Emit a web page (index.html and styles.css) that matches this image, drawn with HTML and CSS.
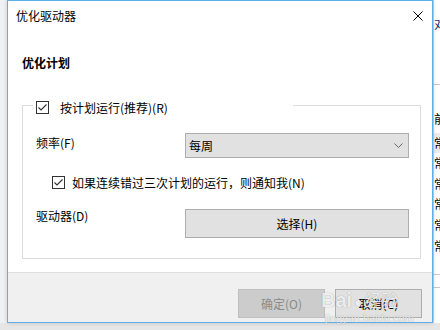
FILE: index.html
```html
<!DOCTYPE html>
<html lang="zh-CN">
<head>
  <meta charset="UTF-8" />
  <title>优化驱动器</title>
  <link rel="stylesheet" href="styles.css">
</head>
<body>
  <div class="screen">
    <div class="gutter"></div>

    <!-- Dialog window -->
    <div class="dialog">
      <div class="titlebar">
        <span class="title">优化驱动器</span>
        <svg class="close" width="10" height="10" viewBox="0 0 10 10">
          <path d="M0.5 0.5 L9.5 9.5 M9.5 0.5 L0.5 9.5" stroke="#000" stroke-width="1" fill="none" />
        </svg>
      </div>

      <div class="content">
        <h2 class="section-title">优化计划</h2>
        <fieldset class="group">
          <legend class="group-head">
            <span class="check">
              <svg width="13" height="13" viewBox="0 0 13 13">
                <rect x="0.5" y="0.5" width="12" height="12" fill="#fff" stroke="#333" />
                <polyline points="2.5,6.5 5,9 10.5,3.5" fill="none" stroke="#333" stroke-width="1.1" />
              </svg>
            </span>
            <span>按计划运行(推荐)(R)</span>
          </legend>

          <div class="row row-freq">
            <span class="row-label">频率(F)</span>
            <div class="combo">
              <span>每周</span>
              <svg width="9" height="5" viewBox="0 0 9 5">
                <polyline points="0.5,0.5 4.5,4.5 8.5,0.5" fill="none" stroke="#666" stroke-width="1" />
              </svg>
            </div>
          </div>

          <div class="row row-notify">
            <span class="check">
              <svg width="13" height="13" viewBox="0 0 13 13">
                <rect x="0.5" y="0.5" width="12" height="12" fill="#fff" stroke="#333" />
                <polyline points="2.5,6.5 5,9 10.5,3.5" fill="none" stroke="#333" stroke-width="1.1" />
              </svg>
            </span>
            <span>如果连续错过三次计划的运行，则通知我(N)</span>
          </div>

          <div class="row row-drive">
            <span class="row-label">驱动器(D)</span>
            <button class="btn btn-wide">选择(H)</button>
          </div>
        </fieldset>
      </div>

      <div class="footer">
        <button class="btn btn-disabled">确定(O)</button>
        <button class="btn">取消(C)</button>
      </div>

      <!-- site watermark over the footer -->
      <div class="watermark">
        <span class="wm-logo">Bai</span><span class="wm-paw">&#9679;</span><span class="wm-cn">经验</span>
        <div class="wm-url">jingyan.baidu.com</div>
      </div>
    </div>

    <!-- window behind the dialog -->
    <div class="backdrop">
      <p class="bg-row bg-top">对</p>
      <div class="bg-line"></div>
      <p class="bg-row bg-first">前</p>
      <p class="bg-row bg-sel">常</p>
      <p class="bg-row">常</p>
      <p class="bg-row">常</p>
      <p class="bg-row">常</p>
      <p class="bg-row">常</p>
      <p class="bg-row">常</p>
      <div class="bg-line bg-line-low"></div>
      <div class="bg-line bg-line-last"></div>
    </div>
  </div>
</body>
</html>
```

FILE: styles.css
```css
* {
  box-sizing: border-box;
}
body {
  margin: 0;
  font-family: "Noto Sans CJK SC", "Noto Sans", sans-serif;
  font-size: 12px;
  line-height: 17px;
  color: #000;
  background: #e9e9e9;
}
.screen {
  display: flex;
  width: 440px;
  height: 330px;
  overflow: hidden;
  background: #e6e6e6;
}
.gutter {
  width: 7px;
  height: 323px;
  background: #f1f1f1;
  flex-shrink: 0;
}

/* dialog */
.dialog {
  position: relative;
  z-index: 1;
  width: 426px;
  height: 323px;
  flex-shrink: 0;
  display: flex;
  flex-direction: column;
  border: 1px solid #5eb0ec;
  background: #fff;
  box-shadow: 0 0 4px rgba(0,0,0,0.18);
}
.titlebar {
  height: 29px;
  display: flex;
  align-items: center;
  justify-content: space-between;
  padding: 0 9px 0 8px;
}
.title {
  padding-bottom: 1px;
}
.close {
  display: block;
}
.content {
  height: 242px;
  padding: 24px 11px 0 14px;
}
.section-title {
  margin: 0;
  font-size: 12px;
  line-height: 17px;
  font-weight: bold;
}

/* group box */
.group {
  margin: 23px 0 0 0;
  padding: 0 11px 20px 13px;
  border: 1px solid #dcdcdc;
  min-width: 0;
}
.group-head {
  display: flex;
  align-items: center;
  gap: 11px;
  width: 260px;
  margin-left: -3px;
  padding: 5px 3px 0 3px;
}
.check {
  display: block;
  width: 13px;
  height: 13px;
}
.check svg {
  display: block;
}
.row {
  display: flex;
  align-items: flex-start;
}
.row-label {
  width: 149px;
  flex-shrink: 0;
}
.row-freq {
  margin-top: 17px;
}
.row-freq .row-label {
  padding-top: 1px;
}
.combo {
  flex: 1;
  height: 25px;
  display: flex;
  align-items: center;
  justify-content: space-between;
  padding: 0 5px 0 3px;
  background: #e1e1e1;
  border: 1px solid #adadad;
}
.row-notify {
  margin-top: 16px;
  padding-left: 16px;
  align-items: center;
  gap: 7px;
}
.row-drive {
  margin-top: 18px;
}
.row-drive .row-label {
  margin-top: -2px;
}

/* buttons */
.btn {
  font-family: inherit;
  font-size: 12px;
  line-height: 17px;
  color: #000;
  background: #e1e1e1;
  border: 1px solid #adadad;
  padding: 0;
  height: 29px;
  width: 87px;
}
.btn-wide {
  flex: 1;
  width: auto;
}
.btn-disabled {
  background: #cccccc;
  border-color: #bfbfbf;
  color: #8a8a8a;
}
.footer {
  flex: 1;
  display: flex;
  justify-content: flex-end;
  gap: 10px;
  padding: 16px 10px 0 0;
  background: #f0f0f0;
  border-top: 1px solid #dfdfdf;
}

/* watermark */
.watermark {
  position: absolute;
  left: 313px;
  top: 290px;
  color: rgba(255,255,255,0.85);
  text-shadow: 0 0 1px rgba(0,0,0,0.4);
  font-family: "Liberation Sans", sans-serif;
  line-height: 18px;
  pointer-events: none;
}
.wm-logo {
  font-size: 20px;
  font-weight: bold;
}
.wm-paw {
  font-size: 14px;
  margin: 0 2px;
}
.wm-cn {
  font-family: "Noto Sans CJK SC", sans-serif;
  font-size: 17px;
}
.wm-url {
  font-size: 11px;
  line-height: 12px;
  margin-left: 4px;
}

/* background window on the right */
.backdrop {
  flex: 1;
  height: 323px;
  background: #fff;
  padding: 14px 0 0 0;
  border-left: 1px solid #d0d0d0;
}
.bg-row {
  margin: 0;
  height: 20.6px;
  line-height: 20px;
  white-space: nowrap;
}
.bg-top {
  height: 20px;
  color: #1a2a7a;
}
.bg-line {
  height: 1px;
  margin: 50px 0 24px -1px;
  background: #c8c8c8;
}
.bg-first {
  margin-bottom: 3px;
}
.bg-sel {
  background: #ececec;
}
.bg-line-low {
  margin: 18px 0 0 -1px;
}
.bg-line-last {
  margin: 12px 0 0 -1px;
}
```
